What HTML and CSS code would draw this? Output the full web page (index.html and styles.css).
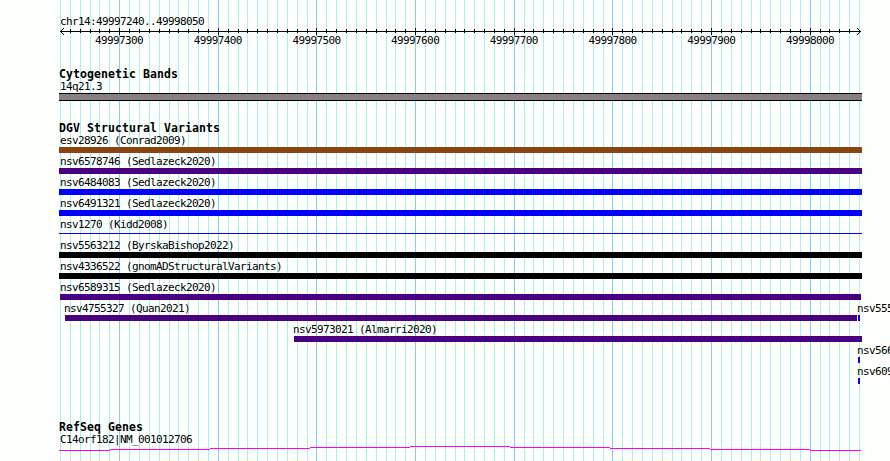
FILE: index.html
```html
<!DOCTYPE html>
<html lang="en">
<head>
  <meta charset="UTF-8">
  <title>chr14:49997240..49998050</title>
  <link rel="stylesheet" href="styles.css">
</head>
<body>
  <div class="browser">
    <svg class="grid" id="grid" width="890" height="461"></svg>

    <header class="ruler">
      <div class="region">chr14:49997240..49998050</div>
      <svg class="scale" id="scale" width="890" height="9"></svg>
      <div class="positions">
        <span>49997300</span>
        <span>49997400</span>
        <span>49997500</span>
        <span>49997600</span>
        <span>49997700</span>
        <span>49997800</span>
        <span>49997900</span>
        <span>49998000</span>
      </div>
    </header>

    <section class="track cyto">
      <h2>Cytogenetic Bands</h2>
      <div class="label">14q21.3</div>
      <div class="band"></div>
    </section>

    <section class="track variants">
      <h2>DGV Structural Variants</h2>
      <div id="variants"></div>
    </section>

    <section class="track genes">
      <h2>RefSeq Genes</h2>
      <div class="label">C14orf182|NM_001012706</div>
      <svg class="gene" width="890" height="6">
        <path d="M59 4.5H110M110 3.5H210M210 2.5H310M310 1.5H410M410 .5H510M510 1.5H610M610 2.5H710M710 3.5H810M810 4.5H861"/>
      </svg>
    </section>
  </div>

  <script>
    const START = 49997240;
    const END = 49998050;
    const LEFT = 60;
    const SCALE = 800 / 811;

    // one entry per row: [name, color, first pixel, last pixel, label pixel]
    const rows = [
      [['esv28926 (Conrad2009)', 'brown', 59, 862, 60]],
      [['nsv6578746 (Sedlazeck2020)', 'indigo', 59, 862, 60]],
      [['nsv6484083 (Sedlazeck2020)', 'blue', 59, 862, 60]],
      [['nsv6491321 (Sedlazeck2020)', 'blue', 59, 862, 60]],
      [['nsv1270 (Kidd2008)', 'thin', 59, 862, 60]],
      [['nsv5563212 (ByrskaBishop2022)', 'black', 59, 862, 60]],
      [['nsv4336522 (gnomADStructuralVariants)', 'black', 59, 862, 60]],
      [['nsv6589315 (Sedlazeck2020)', 'indigo', 60, 861, 60]],
      [['nsv4755327 (Quan2021)', 'indigo', 65, 857, 64], ['nsv555', 'blue', 858, 860, 857]],
      [['nsv5973021 (Almarri2020)', 'indigo', 294, 862, 293]],
      [['nsv566', 'blue', 858, 860, 857]],
      [['nsv609', 'blue', 858, 860, 857]]
    ];

    function drawRuler() {
      let lines = '';
      let ticks = '<path d="M60 4.5H861"/>';
      // arrow heads, one pixel step at a time
      for (let i = 0; i < 4; i++) {
        for (const y of [4 - i, 4 + i]) {
          ticks += `<rect x="${60 + i}" y="${y}" width="1" height="1"/>`;
          ticks += `<rect x="${860 - i}" y="${y}" width="1" height="1"/>`;
        }
      }
      for (let pos = START; pos <= END; pos += 10) {
        const x = LEFT + Math.round((pos - START) * SCALE);
        const major = pos % 100 === 0;
        lines += `<rect class="${major ? 'major' : 'minor'}" x="${x}" y="0" width="1" height="461"/>`;
        if (pos > START && pos < END) {
          ticks += `<rect x="${x}" y="${major ? 1 : 2}" width="1" height="${major ? 7 : 4}"/>`;
        }
      }
      document.getElementById('grid').innerHTML = lines;
      document.getElementById('scale').innerHTML = ticks;
    }

    function createRowHTML(row) {
      return '<div class="row">' + row.map(([name, color, from, to, text]) => `
        <div class="label" style="margin-left:${text}px">${name}</div>
        <div class="bar ${color}" style="margin-left:${from}px;width:${to - from}px"></div>
      `).join('') + '</div>';
    }

    drawRuler();
    document.getElementById('variants').innerHTML = rows.map(createRowHTML).join('');
  </script>
</body>
</html>
```
FILE: styles.css
```css
body {
  margin: 0;
  background: #fdfffc;
  color: #000;
  font-family: "DejaVu Sans Mono", monospace;
  font-size: 11px;
  line-height: 15px;
  letter-spacing: -0.62px;
}

.browser {
  position: relative;
  width: 890px;
  height: 461px;
  overflow: hidden;
  white-space: nowrap;
}

svg {
  display: block;
  shape-rendering: crispEdges;
}

/* vertical lines behind all the tracks */
.grid {
  position: absolute;
  top: 0;
  left: 0;
}
.minor {
  fill: #afeeee;
}
.major {
  fill: #87ceeb;
}

.ruler,
.track {
  position: relative;
}

.ruler {
  height: 66px;
  padding-top: 14px;
  box-sizing: border-box;
}
.region {
  height: 13px;
  padding-left: 60px;
}
.scale path {
  fill: none;
  stroke: #000;
}
.positions {
  display: flex;
  justify-content: space-between;
  width: 739px;
  margin-top: -3px;
  padding-left: 95px;
}
.positions span {
  width: 48px;
}

h2 {
  margin: 0;
  height: 12px;
  padding-left: 59px;
  font-size: 11.5px;
  line-height: 17px;
  letter-spacing: 0.08px;
}

.label {
  height: 15px;
  line-height: 17px;
}

.cyto,
.variants {
  box-sizing: border-box;
}
.cyto {
  height: 54px;
}
.cyto .label,
.genes .label {
  padding-left: 60px;
}
.band {
  width: 803px;
  height: 8px;
  margin-left: 59px;
  border: solid #000;
  border-width: 1px 0;
  box-sizing: border-box;
  background: #878085;
}

.variants {
  height: 299px;
}
.row {
  display: grid;
  grid-template-rows: 15px 6px;
  grid-auto-flow: column;
  grid-auto-columns: 0;
}

.bar {
  height: 6px;
}
.brown {
  background: #8b4513;
}
.indigo {
  background: #4b0082;
}
.blue {
  background: #0000ff;
}
.black {
  background: #000;
}
.thin {
  height: 1px;
  margin-top: 2px;
  background: #0000ff;
}

.gene path {
  fill: none;
  stroke: #ff00ff;
}
```
